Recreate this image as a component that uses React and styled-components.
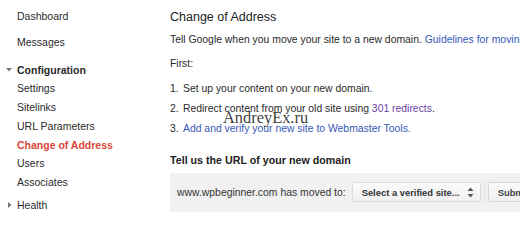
import React from "react";
import styled, { createGlobalStyle } from "styled-components";

const Global = createGlobalStyle`
  html, body { margin: 0; padding: 0; background: #fff; }
  body { width: 520px; height: 225px; overflow: hidden; font-family: "Liberation Sans", Arial, sans-serif; color: #222; }
`;

const Page = styled.div`
  position: relative;
  display: flex;
  width: 520px;
  height: 225px;
  overflow: hidden;
`;

const Sidebar = styled.nav`
  width: 170px;
  flex: none;
  padding-top: 6.5px;
  font-size: 10.5px;
`;

const NavItem = styled.div`
  position: relative;
  height: 18.7px;
  line-height: 18.7px;
  padding-left: 17px;
  margin-top: ${(p) => p.$gap || 0}px;
  color: ${(p) => (p.$active ? "#d9473a" : "#2a2a2a")};
  font-weight: ${(p) => (p.$bold ? "bold" : "normal")};
  white-space: nowrap;
`;

const Caret = styled.svg`
  position: absolute;
  left: ${(p) => p.$left}px;
  top: ${(p) => p.$top}px;
`;

const Main = styled.main`
  flex: 1;
  min-width: 0;
  padding-top: 9px;
  font-size: 10.4px;
  white-space: nowrap;
  color: #2a2a2a;
`;

const Heading = styled.h1`
  margin: 0;
  font-size: 12.5px;
  font-weight: normal;
  line-height: 16px;
  color: #222;
`;

const Para = styled.p`
  margin: ${(p) => p.$mt}px 0 0;
  line-height: 16px;
`;

const Link = styled.a`
  color: ${(p) => (p.$visited ? "#6a3fa6" : "#3558b8")};
  text-decoration: none;
`;

const Steps = styled.ol`
  margin: 7px 0 0;
  padding: 0;
  list-style: none;
`;

const Step = styled.li`
  display: flex;
  line-height: 20px;
  height: 20px;
`;

const Num = styled.span`
  width: 13px;
  flex: none;
`;

const SubHeading = styled.h2`
  margin: 13px 0 0;
  font-size: 10.7px;
  font-weight: bold;
  line-height: 16px;
  color: #222;
`;

const FormBar = styled.div`
  margin-top: 5.4px;
  height: 39px;
  background: #f1f1f1;
  display: flex;
  align-items: center;
  padding-left: 7px;
`;

const FormLabel = styled.span`
  color: #333;
  margin-right: 6px;
`;

const Select = styled.div`
  box-sizing: border-box;
  width: 129px;
  height: 20px;
  flex: none;
  border: 1px solid #dcdcdc;
  border-radius: 2px;
  background: linear-gradient(#fafafa, #f1f1f1);
  display: flex;
  align-items: center;
  justify-content: space-between;
  padding: 0 6px 0 9px;
  font-size: 9.4px;
  font-weight: bold;
  color: #333;
`;

const Divider = styled.div`
  width: 1px;
  height: 20px;
  background: #e2e2e2;
  margin: 0 3px 0 3px;
  flex: none;
`;

const Button = styled.div`
  box-sizing: border-box;
  height: 20px;
  flex: none;
  border: 1px solid #d6d6d6;
  border-radius: 2px;
  background: linear-gradient(#fafafa, #f1f1f1);
  padding: 0 14px 0 9px;
  display: flex;
  align-items: center;
  font-size: 9.4px;
  font-weight: bold;
  color: #444;
`;

const Watermark = styled.div`
  position: absolute;
  left: 223px;
  top: 108px;
  font-family: "Liberation Serif", "Times New Roman", serif;
  font-size: 16.4px;
  line-height: 20px;
  color: rgba(20, 20, 20, 0.85);
  pointer-events: none;
`;

const Updown = () => (
  <svg width="7" height="11" viewBox="0 0 7 11">
    <path d="M3.5 0.5 L6.5 4 L0.5 4 Z" fill="#555" />
    <path d="M0.5 7 L6.5 7 L3.5 10.5 Z" fill="#555" />
  </svg>
);

export default function App() {
  return (
    <>
      <Global />
      <Page>
        <Sidebar>
          <NavItem>Dashboard</NavItem>
          <NavItem $gap={8.3}>Messages</NavItem>
          <NavItem $gap={8.6} $bold>
            <Caret $left={6} $top={7.5} width="6" height="4" viewBox="0 0 6 4">
              <path d="M0 0 L6 0 L3 3.5 Z" fill="#777" />
            </Caret>
            Configuration
          </NavItem>
          <NavItem>Settings</NavItem>
          <NavItem>Sitelinks</NavItem>
          <NavItem>URL Parameters</NavItem>
          <NavItem $active $bold>Change of Address</NavItem>
          <NavItem>Users</NavItem>
          <NavItem>Associates</NavItem>
          <NavItem $gap={4.3}>
            <Caret $left={7.5} $top={6.5} width="4" height="6" viewBox="0 0 4 6">
              <path d="M0 0 L3.5 3 L0 6 Z" fill="#777" />
            </Caret>
            Health
          </NavItem>
        </Sidebar>
        <Main>
          <Heading>Change of Address</Heading>
          <Para $mt={6.6}>
            Tell Google when you move your site to a new domain.{" "}
            <Link href="#">Guidelines for moving your site</Link>
          </Para>
          <Para $mt={8}>First:</Para>
          <Steps>
            <Step>
              <Num>1.</Num>
              <span>Set up your content on your new domain.</span>
            </Step>
            <Step>
              <Num>2.</Num>
              <span>
                Redirect content from your old site using{" "}
                <Link href="#" $visited>301 redirects</Link>.
              </span>
            </Step>
            <Step>
              <Num>3.</Num>
              <Link href="#">Add and verify your new site to Webmaster Tools.</Link>
            </Step>
          </Steps>
          <SubHeading>Tell us the URL of your new domain</SubHeading>
          <FormBar>
            <FormLabel>www.wpbeginner.com has moved to:</FormLabel>
            <Select>
              <span>Select a verified site...</span>
              <Updown />
            </Select>
            <Divider />
            <Button>Submit</Button>
          </FormBar>
        </Main>
        <Watermark>AndreyEx.ru</Watermark>
      </Page>
    </>
  );
}
